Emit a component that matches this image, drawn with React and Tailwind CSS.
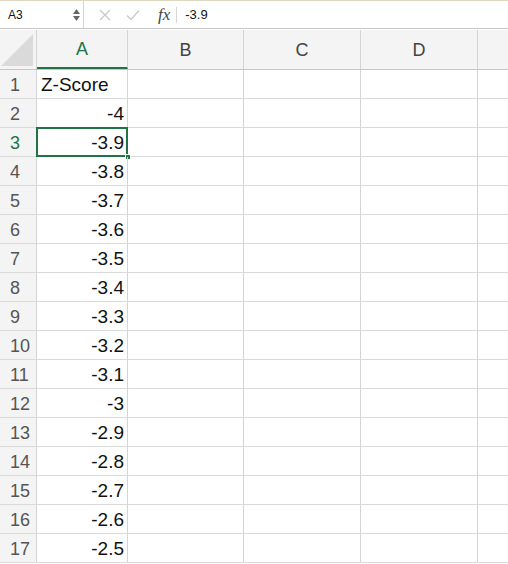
import React from 'react';

const rows = ['Z-Score', '-4', '-3.9', '-3.8', '-3.7', '-3.6', '-3.5', '-3.4', '-3.3', '-3.2', '-3.1', '-3', '-2.9', '-2.8', '-2.7', '-2.6', '-2.5'];
const cols = [
  { id: 'A', w: 'w-[91px]' },
  { id: 'B', w: 'w-[116px]' },
  { id: 'C', w: 'w-[117px]' },
  { id: 'D', w: 'w-[117px]' },
];

const App = () => {
  return (
    <div className="w-[508px] h-[564px] overflow-hidden bg-white text-[#111]" style={{ fontFamily: '"Liberation Sans", Arial, sans-serif' }}>
      {/* formula bar */}
      <div className="h-[29px] flex items-center border-t border-t-[#dcd8c2] border-b border-b-[#c6c6c6]">
        <div className="w-[84px] h-full flex items-center justify-between pl-2 pr-[3px] border-r border-[#d6d6d6]">
          <span className="text-[12px]">A3</span>
          <div className="flex flex-col items-center gap-[2px] text-[#666]">
            <svg width="7" height="5" viewBox="0 0 7 5"><path d="M0 5 L3.5 0 L7 5 Z" fill="currentColor" /></svg>
            <svg width="7" height="5" viewBox="0 0 7 5"><path d="M0 0 L3.5 5 L7 0 Z" fill="currentColor" /></svg>
          </div>
        </div>
        <div className="flex items-center pl-[15px] gap-[15px] text-[#c8c8c8]">
          <svg width="12" height="12" viewBox="0 0 12 12"><path d="M1 1 L11 11 M11 1 L1 11" stroke="currentColor" strokeWidth="1.3" /></svg>
          <svg width="14" height="12" viewBox="0 0 14 12"><path d="M1 6.5 L5 10.5 L13 1.5" stroke="currentColor" strokeWidth="1.3" fill="none" /></svg>
        </div>
        <span className="ml-[18px] text-[17px] italic text-[#444]" style={{ fontFamily: '"Liberation Serif", serif' }}>fx</span>
        <div className="ml-[6px] w-px h-[16px] bg-[#d6d6d6]" />
        <span className="ml-[8px] text-[13px]">-3.9</span>
      </div>

      {/* column headers */}
      <div className="mt-px flex h-[40px] bg-[#f4f4f4] border-b border-[#c6c6c6]">
        <div className="w-[37px] h-full border-r border-[#d4d4d4] relative overflow-hidden">
          <svg className="absolute right-[3px] bottom-[3px]" width="32" height="32" viewBox="0 0 32 32"><path d="M32 0 L32 32 L0 32 Z" fill="#dadada" /></svg>
        </div>
        {cols.map((c) => (
          <div key={c.id} className={`${c.w} h-full flex items-center justify-center pt-[2px] border-r border-[#d4d4d4] text-[18px] ${c.id === 'A' ? 'text-[#217346] border-b-2 border-b-[#217346]' : 'text-[#444]'}`}>
            {c.id}
          </div>
        ))}
        <div className="flex-1" />
      </div>

      {/* rows */}
      {rows.map((v, i) => {
        const selected = i === 2;
        return (
          <div key={i} className="flex h-[29px] border-b border-[#dadada]">
            <div className={`w-[37px] bg-[#f4f4f4] border-r border-[#d4d4d4] flex items-center pt-[2px] pl-[10px] text-[18px] ${selected ? 'text-[#217346]' : 'text-[#555]'}`}>
              {i + 1}
            </div>
            <div className={`w-[91px] border-r border-[#d4d4d4] flex items-center pt-[2px] text-[19px] relative ${i === 0 ? 'justify-start pl-1' : 'justify-end pr-[3px]'}`}>
              {v}
              {selected && (
                <>
                  <div className="absolute -left-px -top-px -right-px -bottom-px border-2 border-[#217346]" />
                  <div className="absolute -right-[4px] -bottom-[4px] w-[6px] h-[6px] bg-[#217346] border border-white" />
                </>
              )}
            </div>
            <div className="w-[116px] border-r border-[#d4d4d4]" />
            <div className="w-[117px] border-r border-[#d4d4d4]" />
            <div className="w-[117px] border-r border-[#d4d4d4]" />
            <div className="flex-1" />
          </div>
        );
      })}
    </div>
  );
};

export default App;
